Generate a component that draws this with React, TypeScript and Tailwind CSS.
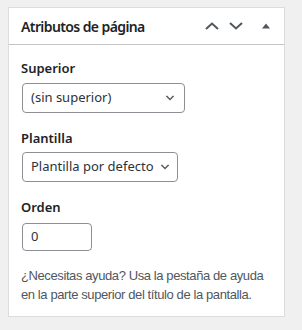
import React from 'react';

const font = { fontFamily: '"Noto Sans", "Liberation Sans", sans-serif' };

const Chevron = ({ up = false }: { up?: boolean }) => (
  <svg width="14" height="8" viewBox="0 0 14 8" className="block">
    <path
      d={up ? 'M1 7 L7 1.5 L13 7' : 'M1 1 L7 6.5 L13 1'}
      fill="none"
      stroke="#50575e"
      strokeWidth="2"
    />
  </svg>
);

const SelectArrow = () => (
  <svg width="12" height="12" viewBox="0 0 20 20" className="shrink-0">
    <path d="M5 6l5 5 5-5 2 1-7 7-7-7 2-1z" fill="#50575e" />
  </svg>
);

const App: React.FC = () => (
  <div className="w-[302px] h-[330px] bg-[#f0f0f1] pt-[7px] pl-2" style={font}>
    <div className="w-[277px] bg-white border border-[#dcdcde]">
      <div className="h-[37px] flex items-center justify-between pl-3 border-b border-[#c3c4c7]">
        <h2 className="text-[14px] font-semibold text-[#1d2327] tracking-[-0.6px]">Atributos de página</h2>
        <div className="flex items-center h-full">
          <div className="w-6 flex justify-center"><Chevron up /></div>
          <div className="w-6 flex justify-center"><Chevron /></div>
          <div className="w-9 flex justify-center">
            <svg width="8" height="6" viewBox="0 0 8 6" className="block">
              <path d="M0 5.5 L4 0.5 L8 5.5 Z" fill="#50575e" />
            </svg>
          </div>
        </div>
      </div>
      <div className="px-3 pt-[14px] pb-3 text-[13px] text-[#1d2327]">
        <p className="font-semibold leading-[18px]">Superior</p>
        <div className="mt-[6px] ml-px w-[163px] h-[30px] border border-[#8c8f94] rounded-[4px] flex items-center justify-between pl-2 pr-2 text-[#2c3338]">
          <span>(sin superior)</span>
          <SelectArrow />
        </div>
        <p className="mt-4 font-semibold leading-[18px]">Plantilla</p>
        <div className="mt-[5px] ml-px w-[156px] h-[30px] border border-[#8c8f94] rounded-[4px] flex items-center justify-between pl-2 pr-[6px] text-[#2c3338]">
          <span className="whitespace-nowrap">Plantilla por defecto</span>
          <SelectArrow />
        </div>
        <p className="mt-4 font-semibold leading-[18px]">Orden</p>
        <div className="mt-[7px] ml-px w-[70px] h-[28px] border border-[#8c8f94] rounded-[4px] flex items-center pl-2 text-[#2c3338]">
          0
        </div>
        <p
          className="mt-[15px] leading-[19px] text-[#50575e] text-[13px] tracking-[-0.4px]"
          style={{ fontFamily: '"Liberation Sans", Arial, sans-serif' }}
        >
          ¿Necesitas ayuda? Usa la pestaña de ayuda en la parte superior del título de la pantalla.
        </p>
      </div>
    </div>
  </div>
);

export default App;
